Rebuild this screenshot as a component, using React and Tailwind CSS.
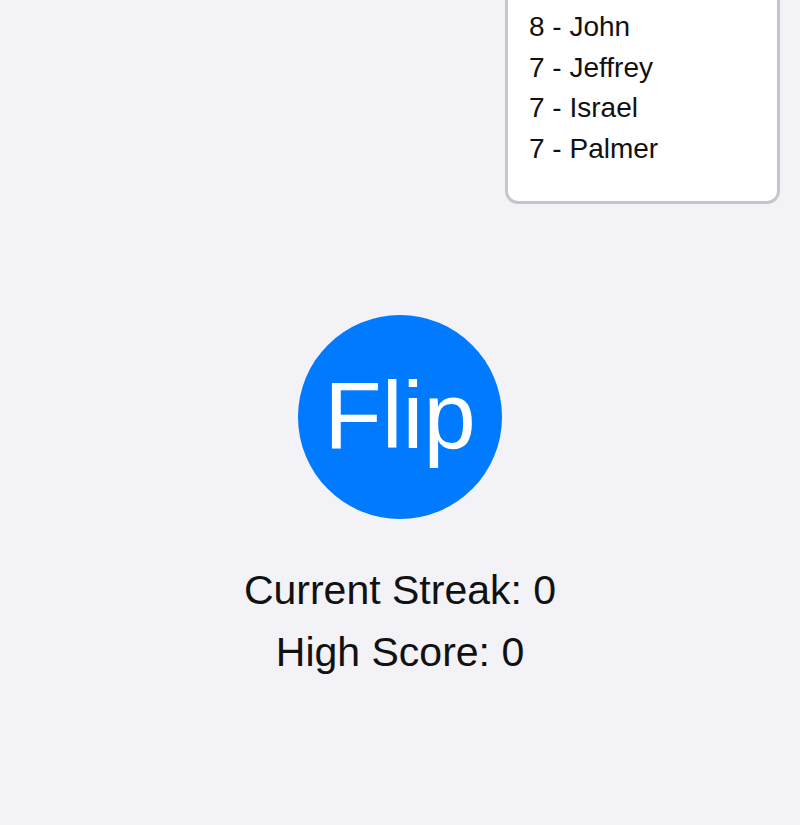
const LEADERS = [
  { score: 8, name: 'John' },
  { score: 7, name: 'Jeffrey' },
  { score: 7, name: 'Israel' },
  { score: 7, name: 'Palmer' },
];

export default function App() {
  return (
    <div
      className="min-h-screen w-full bg-[#f2f2f7] text-black"
      style={{ fontFamily: '"Liberation Sans", Arial, sans-serif' }}
    >
      {/* Leaderboard card (top scrolled off) */}
      <div className="flex justify-end pr-[20px]">
        <div className="w-[275px] bg-white border-[3px] border-t-0 border-[#c6c6ca] rounded-b-[13px] pl-[21px] pt-[7px] pb-[31px]">
          {LEADERS.map((l) => (
            <div key={l.name} className="text-[28px] leading-[40.7px] text-[#111]">
              {l.score} - {l.name}
            </div>
          ))}
        </div>
      </div>

      {/* Flip button + stats */}
      <div className="flex flex-col items-center pt-[111px]">
        <button
          type="button"
          className="w-[204px] h-[204px] rounded-full bg-[#007aff] text-white text-[94px] leading-none flex items-center justify-center"
        >
          <span className="-mt-[2px]">Flip</span>
        </button>
        <div className="mt-[40px] flex flex-col items-center text-[41px] leading-[62px] text-[#111]">
          <div>Current Streak: 0</div>
          <div>High Score: 0</div>
        </div>
      </div>
    </div>
  );
}
